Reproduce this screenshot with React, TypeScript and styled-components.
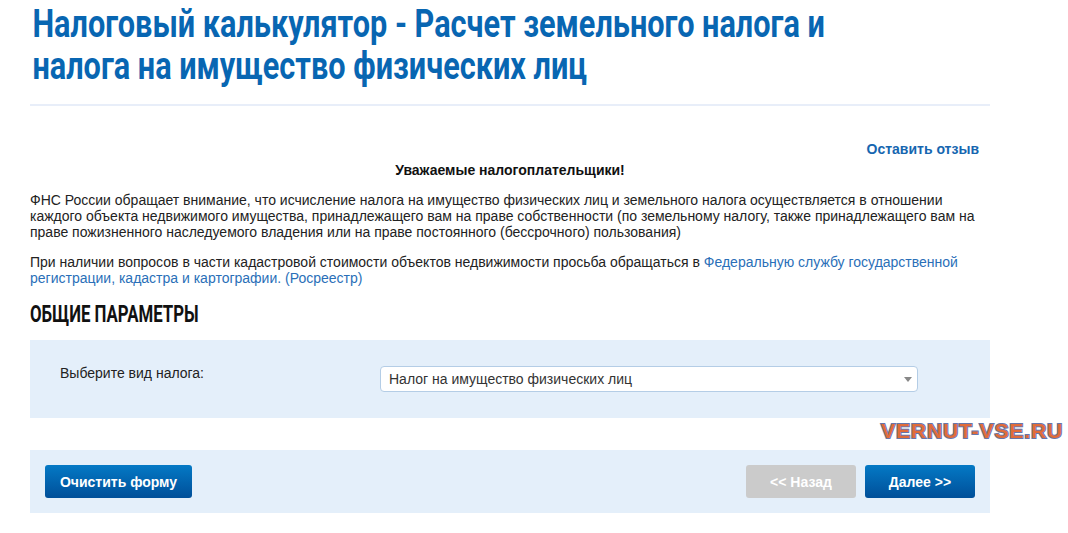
import styled, { createGlobalStyle } from 'styled-components';

const GlobalStyle = createGlobalStyle`
  html, body {
    margin: 0;
    padding: 0;
    background: #fff;
  }
  body {
    font-family: 'Liberation Sans', Arial, sans-serif;
    font-size: 14px;
    color: #222;
  }
`;

const Page = styled.div`
  position: relative;
  width: 1068px;
  height: 533px;
  overflow: hidden;
`;

const Content = styled.div`
  width: 960px;
  margin-left: 30px;
`;

// headings use a narrow face: Roboto squeezed horizontally
const Title = styled.h1`
  margin: 0;
  padding: 3px 0 0 3px;
  font-family: Roboto, 'Liberation Sans', sans-serif;
  font-weight: 700;
  font-size: 38px;
  line-height: 42px;
  color: #0866b2;
  white-space: nowrap;
  transform: scaleX(0.807);
  transform-origin: left top;
`;

const Divider = styled.div`
  height: 2px;
  background: #e8eef9;
  margin-top: 17px;
`;

const FeedbackRow = styled.div`
  display: flex;
  justify-content: flex-end;
  padding: 35px 11px 0 0;
`;

const FeedbackLink = styled.a`
  font-weight: 700;
  color: #1666b0;
  text-decoration: none;
  line-height: 16px;
`;

const Greeting = styled.div`
  text-align: center;
  font-weight: 700;
  color: #111;
  line-height: 16px;
  margin-top: 5px;
`;

const Paragraph = styled.p`
  margin: 14px 0 0;
  line-height: 16px;
`;

const Link = styled.a`
  color: #2a6fb8;
  text-decoration: none;
`;

const SectionTitle = styled.h2`
  margin: 16px 0 0;
  font-family: Roboto, 'Liberation Sans', sans-serif;
  font-weight: 700;
  font-size: 23px;
  line-height: 26px;
  color: #111;
  white-space: nowrap;
  transform: scaleX(0.73);
  transform-origin: left top;
`;

const Panel = styled.div<{ $height: number; $gap: number }>`
  background: #e4effa;
  height: ${(p) => p.$height}px;
  margin-top: ${(p) => p.$gap}px;
  box-sizing: border-box;
`;

const ParamRow = styled.div`
  display: grid;
  grid-template-columns: 320px 538px;
  align-items: start;
  padding: 25px 0 0 30px;
`;

const Label = styled.div`
  line-height: 16px;
`;

const Select = styled.div`
  position: relative;
  height: 26px;
  box-sizing: border-box;
  background: #fff;
  border: 1px solid #b4cde6;
  border-radius: 4px;
  padding: 0 24px 0 8px;
  display: flex;
  align-items: center;
  color: #333;
  margin-top: 1px;
`;

const Caret = styled.span`
  position: absolute;
  right: 5px;
  top: 10px;
  width: 0;
  height: 0;
  border-left: 4px solid transparent;
  border-right: 4px solid transparent;
  border-top: 5px solid #888;
`;

const ButtonBar = styled.div`
  display: flex;
  align-items: center;
  gap: 9px;
  padding: 15px 15px 0 15px;
`;

const Spacer = styled.div`
  flex: 1;
`;

const Button = styled.button<{ $disabled?: boolean; $width: number }>`
  width: ${(p) => p.$width}px;
  height: 33px;
  padding: 0;
  border: none;
  border-radius: 3px;
  font-family: 'Liberation Sans', Arial, sans-serif;
  font-weight: 700;
  font-size: 14px;
  color: #fff;
  cursor: pointer;
  background: ${(p) =>
    p.$disabled ? '#cbcbcb' : 'linear-gradient(to bottom, #0479c5, #004f99)'};
`;

const Watermark = styled.div`
  position: absolute;
  left: 881px;
  top: 419px;
  font-family: 'Liberation Sans', Arial, sans-serif;
  font-weight: 700;
  font-size: 21px;
  letter-spacing: 0.9px;
  color: #e06c3a;
  -webkit-text-stroke: 2px #6676aa;
  paint-order: stroke fill;
`;

const App = () => {
  return (
    <Page>
      <GlobalStyle />
      <Content>
        <Title>
          Налоговый калькулятор - Расчет земельного налога и
          <br />
          налога на имущество физических лиц
        </Title>
        <Divider />
        <FeedbackRow>
          <FeedbackLink href="#">Оставить отзыв</FeedbackLink>
        </FeedbackRow>
        <Greeting>Уважаемые налогоплательщики!</Greeting>
        <Paragraph>
          ФНС России обращает внимание, что исчисление налога на имущество
          физических лиц и земельного налога осуществляется в отношении каждого
          объекта недвижимого имущества, принадлежащего вам на праве
          собственности (по земельному налогу, также принадлежащего вам на праве
          пожизненного наследуемого владения или на праве постоянного
          (бессрочного) пользования)
        </Paragraph>
        <Paragraph>
          При наличии вопросов в части кадастровой стоимости объектов
          недвижимости просьба обращаться в{' '}
          <Link href="#">
            Федеральную службу государственной регистрации, кадастра и
            картографии. (Росреестр)
          </Link>
        </Paragraph>
        <SectionTitle>ОБЩИЕ ПАРАМЕТРЫ</SectionTitle>
        <Panel $height={78} $gap={12}>
          <ParamRow>
            <Label>Выберите вид налога:</Label>
            <Select>
              Налог на имущество физических лиц
              <Caret />
            </Select>
          </ParamRow>
        </Panel>
        <Panel $height={63} $gap={32}>
          <ButtonBar>
            <Button $width={147}>Очистить форму</Button>
            <Spacer />
            <Button $width={110} $disabled>
              &lt;&lt; Назад
            </Button>
            <Button $width={110}>Далее &gt;&gt;</Button>
          </ButtonBar>
        </Panel>
      </Content>
      <Watermark>VERNUT-VSE.RU</Watermark>
    </Page>
  );
};

export default App;
